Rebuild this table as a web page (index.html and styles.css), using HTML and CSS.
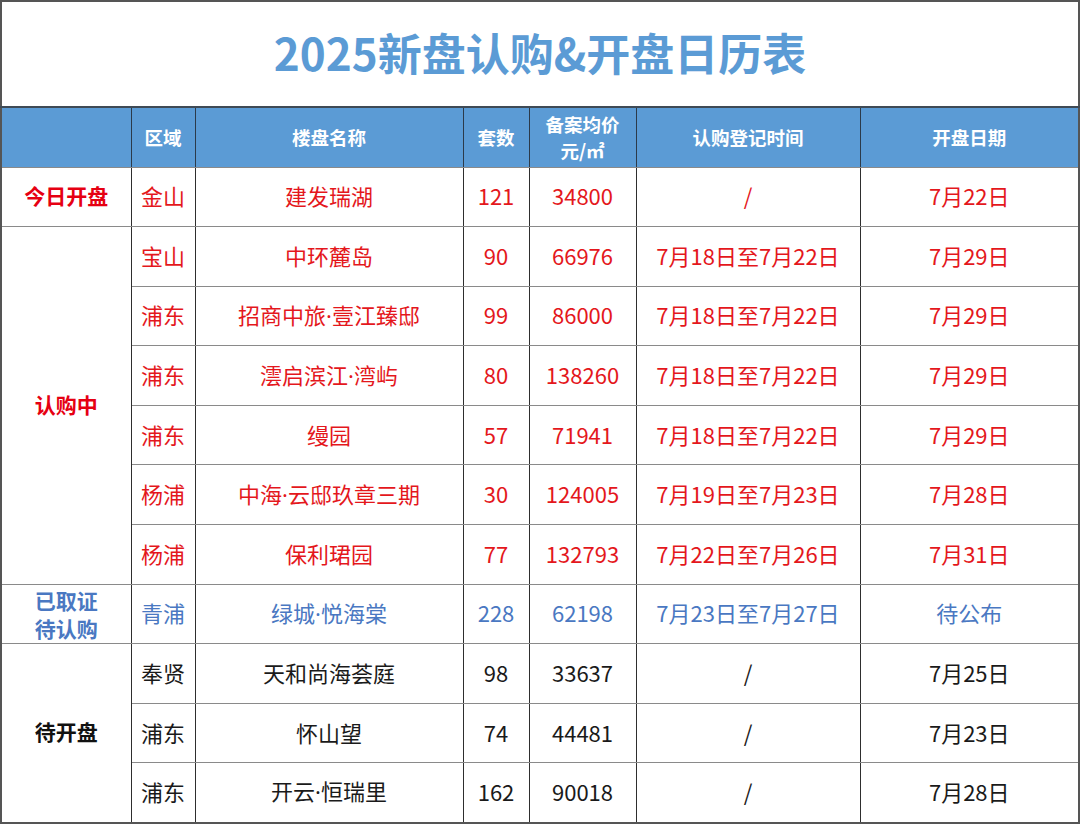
FILE: index.html
```html
<!DOCTYPE html>
<html lang="zh-CN">
<head>
<meta charset="utf-8">
<title>2025新盘认购&amp;开盘日历表</title>
<link rel="stylesheet" href="styles.css">
</head>
<body>
<table class="cal">
  <colgroup>
    <col class="c1"><col class="c2"><col class="c3"><col class="c4"><col class="c5"><col class="c6"><col class="c7">
  </colgroup>
  <tr class="title-row"><td colspan="7" class="title">2025新盘认购&amp;开盘日历表</td></tr>
  <tr class="head">
    <th></th><th>区域</th><th>楼盘名称</th><th>套数</th><th class="two">备案均价<br>元/㎡</th><th>认购登记时间</th><th>开盘日期</th>
  </tr>
  <tr class="red">
    <td class="grp">今日开盘</td><td>金山</td><td>建发瑞湖</td><td>121</td><td>34800</td><td>/</td><td>7月22日</td>
  </tr>
  <tr class="red">
    <td class="grp" rowspan="6">认购中</td><td>宝山</td><td>中环麓岛</td><td>90</td><td>66976</td><td>7月18日至7月22日</td><td>7月29日</td>
  </tr>
  <tr class="red"><td>浦东</td><td>招商中旅<span class="dot">·</span>壹江臻邸</td><td>99</td><td>86000</td><td>7月18日至7月22日</td><td>7月29日</td></tr>
  <tr class="red"><td>浦东</td><td>澐启滨江<span class="dot">·</span>湾屿</td><td>80</td><td>138260</td><td>7月18日至7月22日</td><td>7月29日</td></tr>
  <tr class="red"><td>浦东</td><td>缦园</td><td>57</td><td>71941</td><td>7月18日至7月22日</td><td>7月29日</td></tr>
  <tr class="red"><td>杨浦</td><td>中海<span class="dot">·</span>云邸玖章三期</td><td>30</td><td>124005</td><td>7月19日至7月23日</td><td>7月28日</td></tr>
  <tr class="red"><td>杨浦</td><td>保利珺园</td><td>77</td><td>132793</td><td>7月22日至7月26日</td><td>7月31日</td></tr>
  <tr class="blue">
    <td class="grp two">已取证<br>待认购</td><td>青浦</td><td>绿城<span class="dot">·</span>悦海棠</td><td>228</td><td>62198</td><td>7月23日至7月27日</td><td>待公布</td>
  </tr>
  <tr class="black">
    <td class="grp" rowspan="3">待开盘</td><td>奉贤</td><td>天和尚海荟庭</td><td>98</td><td>33637</td><td>/</td><td>7月25日</td>
  </tr>
  <tr class="black"><td>浦东</td><td>怀山望</td><td>74</td><td>44481</td><td>/</td><td>7月23日</td></tr>
  <tr class="black"><td>浦东</td><td>开云<span class="dot">·</span>恒瑞里</td><td>162</td><td>90018</td><td>/</td><td>7月28日</td></tr>
</table>
</body>
</html>
```
FILE: styles.css
```css
html, body {
  margin: 0;
  padding: 0;
  background: #ffffff;
}
body {
  font-family: "Noto Sans CJK SC", "Noto Sans", sans-serif;
}
.cal {
  border-collapse: collapse;
  table-layout: fixed;
  width: 1079px;
  border: 2px solid #555555;
}
.c1 { width: 130px; }
.c2 { width: 64px; }
.c3 { width: 268px; }
.c4 { width: 66px; }
.c5 { width: 107px; }
.c6 { width: 224px; }
.c7 { width: 219px; }

.cal td, .cal th {
  padding: 0 0 3px 0;
  text-align: center;
  vertical-align: middle;
  border-left: 1px solid #2e2e2e;
  border-right: 1px solid #2e2e2e;
  border-top: 1px solid #8a8a8a;
  border-bottom: 1px solid #8a8a8a;
  font-size: 22px;
  line-height: 28px;
}
.dot {
  font-family: "Noto Sans", "Liberation Sans", sans-serif;
}
.title-row { height: 106px; }
.cal td.title {
  color: #5b9bd5;
  font-size: 44px;
  font-weight: 700;
  line-height: 52px;
  border-bottom: 2px solid #3f4a55;
  padding-bottom: 4px;
}
.head { height: 60px; }
.cal th {
  background: #5b9bd5;
  color: #ffffff;
  font-size: 18.5px;
  font-weight: 700;
  line-height: 26px;
  padding-bottom: 1px;
  border-top: 2px solid #3f4a55;
  border-left: 1px solid #2b3a4a;
  border-right: 1px solid #2b3a4a;
}
.red, .blue, .black { height: 59.6px; }
.red td { color: #e4171c; }
.blue td { color: #4a78c2; }
.black td { color: #1a1a1a; }
.cal td.grp {
  font-weight: 700;
  font-size: 21px;
}
.red td.grp { color: #e60012; }
.cal .blue td.grp { color: #4a78c2; line-height: 28px; padding: 0; }
.black td.grp { color: #111111; }
```
